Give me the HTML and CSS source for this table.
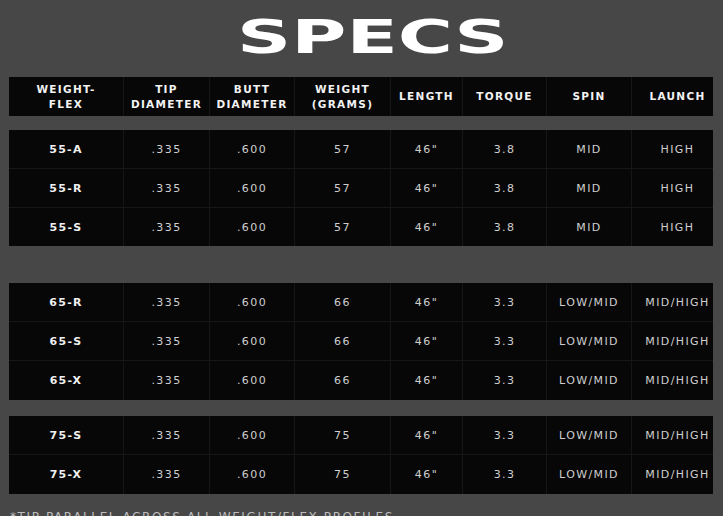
FILE: index.html
```html
<!DOCTYPE html>
<html>
<head>
<meta charset="utf-8">
<link rel="stylesheet" href="styles.css">
</head>
<body>
<div class="page">
  <div class="title"><h1>SPECS</h1></div>

  <div class="grid head">
    <div class="c">WEIGHT-<br>FLEX</div>
    <div class="c">TIP<br>DIAMETER</div>
    <div class="c">BUTT<br>DIAMETER</div>
    <div class="c">WEIGHT<br>(GRAMS)</div>
    <div class="c">LENGTH</div>
    <div class="c">TORQUE</div>
    <div class="c">SPIN</div>
    <div class="c last">LAUNCH</div>
  </div>

  <div class="grid group g1">
    <div class="c k">55-A</div><div class="c">.335</div><div class="c">.600</div><div class="c">57</div><div class="c">46"</div><div class="c">3.8</div><div class="c">MID</div><div class="c last">HIGH</div>
    <div class="c k">55-R</div><div class="c">.335</div><div class="c">.600</div><div class="c">57</div><div class="c">46"</div><div class="c">3.8</div><div class="c">MID</div><div class="c last">HIGH</div>
    <div class="c k">55-S</div><div class="c">.335</div><div class="c">.600</div><div class="c">57</div><div class="c">46"</div><div class="c">3.8</div><div class="c">MID</div><div class="c last">HIGH</div>
  </div>

  <div class="grid group g2">
    <div class="c k">65-R</div><div class="c">.335</div><div class="c">.600</div><div class="c">66</div><div class="c">46"</div><div class="c">3.3</div><div class="c">LOW/MID</div><div class="c last">MID/HIGH</div>
    <div class="c k">65-S</div><div class="c">.335</div><div class="c">.600</div><div class="c">66</div><div class="c">46"</div><div class="c">3.3</div><div class="c">LOW/MID</div><div class="c last">MID/HIGH</div>
    <div class="c k">65-X</div><div class="c">.335</div><div class="c">.600</div><div class="c">66</div><div class="c">46"</div><div class="c">3.3</div><div class="c">LOW/MID</div><div class="c last">MID/HIGH</div>
  </div>

  <div class="grid group g3">
    <div class="c k">75-S</div><div class="c">.335</div><div class="c">.600</div><div class="c">75</div><div class="c">46"</div><div class="c">3.3</div><div class="c">LOW/MID</div><div class="c last">MID/HIGH</div>
    <div class="c k">75-X</div><div class="c">.335</div><div class="c">.600</div><div class="c">75</div><div class="c">46"</div><div class="c">3.3</div><div class="c">LOW/MID</div><div class="c last">MID/HIGH</div>
  </div>

  <p class="note">*TIP PARALLEL ACROSS ALL WEIGHT/FLEX PROFILES</p>
</div>
</body>
</html>
```

FILE: styles.css
```css
html, body {
  margin: 0;
  padding: 0;
  background: #474747;
  overflow: hidden;
  height: 516px;
}

.page {
  padding: 0 10px 0 9px;
  font-family: "DejaVu Sans", sans-serif;
}

.title {
  height: 72px;
  margin-bottom: 5px;
  display: flex;
  align-items: center;
  justify-content: center;
  padding-left: 24px;
}

.title h1 {
  margin: 0;
  font-family: "DejaVu Sans", sans-serif;
  font-weight: 900;
  font-size: 47px;
  color: #ffffff;
  letter-spacing: 0;
  transform: scaleX(1.6);
  line-height: 1;
}

.grid {
  display: grid;
  grid-template-columns: 115px 86px 85px 96px 72px 84px 85px 81px;
  background: #070707;
}

.c {
  display: flex;
  align-items: center;
  justify-content: center;
  text-align: center;
  border-right: 1px solid #161616;
  border-bottom: 1px solid #161616;
  font-size: 11px;
  letter-spacing: 1.4px;
  color: #cfcfcf;
}

.c.last {
  border-right: none;
  padding-left: 10px;
}

.head {
  height: 39px;
  margin-bottom: 14px;
}

.head .c {
  font-weight: bold;
  font-size: 10.5px;
  letter-spacing: 1.3px;
  line-height: 15px;
  color: #f2f2f2;
  border-bottom: none;
}

.group {
  grid-auto-rows: 39px;
}

.g1 { margin-bottom: 37px; grid-template-rows: 39px 39px 38px; }
.g2 { margin-bottom: 16px; }

.group > .c:nth-last-child(-n+8) {
  border-bottom: none;
}

.c.k {
  font-weight: bold;
  color: #f0f0f0;
  letter-spacing: 1.3px;
}

.note {
  margin: 16px 0 0 1px;
  font-size: 12px;
  letter-spacing: 1.6px;
  color: #bdbdbd;
  white-space: nowrap;
}
```
